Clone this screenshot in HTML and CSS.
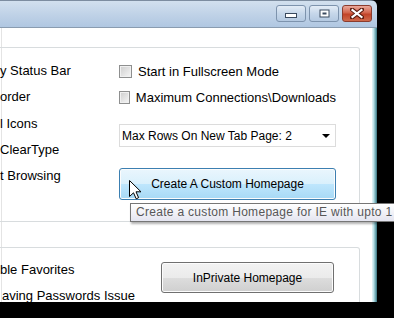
FILE: index.html
```html
<!DOCTYPE html>
<html lang="en">
<head>
  <meta charset="UTF-8" />
  <title>IE Tweaks</title>
  <link rel="stylesheet" href="styles.css">
</head>
<body>
  <div class="window">
    <div class="titlebar">
      <span class="cbtn"><svg width="12" height="6" viewBox="0 0 12 6"><rect x="0.5" y="0.5" width="11" height="4" fill="#fff" stroke="#3a4a5e"/></svg></span>
      <span class="cbtn"><svg width="11" height="9" viewBox="0 0 11 9"><rect x="0.5" y="0.5" width="10" height="8" fill="#3a4a5e"/><rect x="1.5" y="1.5" width="8" height="6" fill="#fff"/><rect x="3.5" y="3.5" width="4" height="2" fill="#3a4a5e"/></svg></span>
      <span class="cbtn close"><svg width="14" height="11" viewBox="0 0 14 11"><path d="M2 1.5 L12 9.5 M12 1.5 L2 9.5" stroke="#5a1c10" stroke-width="4.2" stroke-linecap="square"/><path d="M2.5 2 L11.5 9 M11.5 2 L2.5 9" stroke="#fff" stroke-width="2.2" stroke-linecap="square"/></svg></span>
    </div>
    <div class="client">
      <div class="panel">
        <div class="group group-top">
          <div class="labels">
            <div class="label">y Status Bar</div>
            <div class="label">order</div>
            <div class="label">l Icons</div>
            <div class="label">ClearType</div>
            <div class="label">t Browsing</div>
          </div>
          <div class="options">
            <label class="check"><span class="box"></span>Start in Fullscreen Mode</label>
            <label class="check"><span class="box"></span>Maximum Connections\Downloads</label>
            <div class="select">Max Rows On New Tab Page: 2<span class="arrow"></span></div>
            <div class="btn btn-hover">Create A Custom Homepage</div>
          </div>
        </div>
        <div class="group group-bottom">
          <div class="labels labels-wide">
            <div class="label">ble Favorites</div>
            <div class="label indent">aving Passwords Issue</div>
          </div>
          <div class="btn btn-private">InPrivate Homepage</div>
        </div>
      </div>
      <div class="frame"></div>
    </div>
  </div>

  <div class="tooltip">Create a custom Homepage for IE with upto 1</div>
  <svg class="cursor" width="13" height="20" viewBox="0 0 13 20"><path d="M0.5 0.5 L0.5 16.5 L4.5 12.8 L7.2 18.8 L9.6 17.7 L7 11.8 L12 11.8 Z" fill="#fff" stroke="#000" stroke-linejoin="miter"/></svg>
</body>
</html>
```

FILE: styles.css
```css
body { margin: 0; width: 394px; height: 318px; overflow: hidden; position: relative; background: #000; font-family: "Liberation Sans", Arial, sans-serif; color: #000; }

.window { width: 377px; height: 302px; display: flex; flex-direction: column; overflow: hidden; border-top-right-radius: 6px; }
.titlebar { height: 28px; box-sizing: border-box; border-top: 1px solid #7d8da0; border-bottom: 1px solid #8a9cb0; background: linear-gradient(#d2e0ee, #bdd0e6 60%, #b0c7e1); display: flex; justify-content: flex-end; gap: 3px; padding: 4px 5px 0 0; }
.cbtn { width: 30px; height: 17px; box-sizing: border-box; border: 1px solid #7d93ad; border-radius: 3px; background: linear-gradient(#e3ecf6, #c6d7ea 50%, #b4c9e1); display: flex; align-items: center; justify-content: center; }
.cbtn:first-child svg { margin-top: 5px; }
.close { border-color: #8b3c2e; background: linear-gradient(#eaa99b, #d2644c 45%, #c14328 55%, #cf6a4c); }

.client { flex: 1; display: flex; min-height: 0; }
.panel { flex: 1; background: #fff; padding-top: 19px; overflow: hidden; box-shadow: inset 1px 0 0 #fff, inset 2px 0 0 #e4e4e4; }
.frame { width: 5px; background: linear-gradient(to right, #e6f6f8, #bfe2e8 30%, #6fa9b3 70%, #3b6f7a); }

.group { width: 360px; box-sizing: border-box; border: 1px solid #d8dcde; border-left: none; border-radius: 0 3px 3px 0; display: flex; align-items: flex-start; }
.group-top { padding: 10px 0 21px; }
.group-bottom { margin-top: 25px; padding-top: 9px; height: 80px; }

.labels { width: 119px; display: flex; flex-direction: column; }
.labels-wide { width: 161px; }
.label { height: 26.25px; line-height: 26px; font-size: 13px; white-space: nowrap; }
.indent { margin-left: 2px; }

.options { width: 217px; display: flex; flex-direction: column; }
.check { height: 26px; display: flex; align-items: center; font-size: 13px; white-space: nowrap; }
.box { width: 13px; height: 13px; box-sizing: border-box; margin-right: 6px; border: 1px solid #8e8f8f; background: linear-gradient(135deg, #cdcdcd, #f6f6f6); box-shadow: inset 0 0 0 1px #f0f0f0; }

.select { margin-top: 14px; height: 23px; box-sizing: border-box; border: 1px solid #dcdcdc; font-size: 12px; display: flex; align-items: center; justify-content: space-between; padding: 0 5px 0 2px; }
.arrow { width: 0; height: 0; border-left: 4px solid transparent; border-right: 4px solid transparent; border-top: 4px solid #000; margin-top: 1px; }

.btn { height: 32px; box-sizing: border-box; border: 1px solid #707070; border-radius: 3px; font-size: 12px; display: flex; align-items: center; justify-content: center; background: linear-gradient(#f2f2f2, #ebebeb 50%, #dddddd 51%, #cfcfcf); box-shadow: inset 0 0 0 1px #fcfcfc; }
.btn-hover { margin-top: 21px; border-color: #3c7fb1; background: linear-gradient(#eaf6fd, #d9f0fc 50%, #bee6fd 51%, #a7d9f5); }
.btn-private { width: 173px; height: 31px; margin-top: 5px; }

.tooltip { position: absolute; left: 130px; top: 203px; height: 19px; box-sizing: border-box; border: 1px solid #767676; border-right: none; background: linear-gradient(#ffffff, #e4e5f0); color: #575757; font-size: 12px; letter-spacing: 0.3px; line-height: 17px; padding-left: 5px; white-space: nowrap; width: 270px; box-shadow: 1px 2px 2px rgba(0, 0, 0, 0.3); }
.cursor { position: absolute; left: 129px; top: 180px; }
```
